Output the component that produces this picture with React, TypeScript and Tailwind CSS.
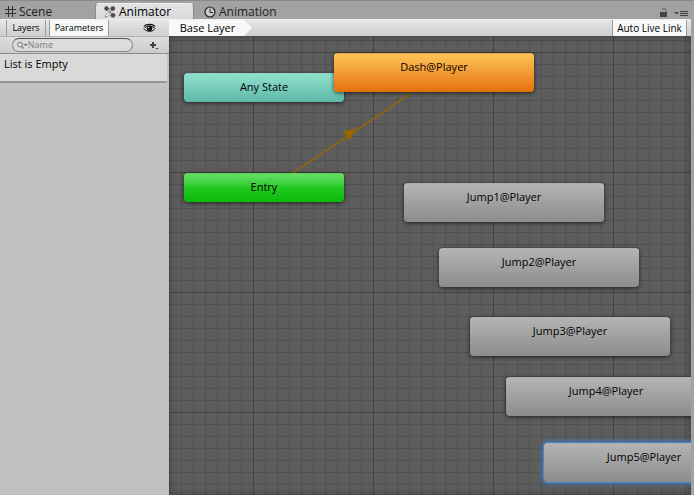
import React from "react";
import clsx from "clsx";

interface StateNode {
  name: string;
  place: string;
  look: string;
  selected?: boolean;
}

const stateNodes: StateNode[] = [
  {
    name: "Any State",
    place: "left-[15px] top-[37px] w-[160px] h-[29px]",
    look: "from-[#8fe0cc] to-[#5fb8a8]",
  },
  {
    name: "Entry",
    place: "left-[15px] top-[137px] w-[160px] h-[29px]",
    look: "from-[#66e066] via-[#20c820] to-[#08bb08]",
  },
  {
    name: "Dash@Player",
    place: "left-[165px] top-[17px] w-[200px] h-[39px]",
    look: "from-[#ffc455] to-[#e27000]",
  },
  {
    name: "Jump1@Player",
    place: "left-[235px] top-[147px] w-[200px] h-[39px]",
    look: "from-[#b4b4b4] to-[#8c8c8c]",
  },
  {
    name: "Jump2@Player",
    place: "left-[270px] top-[212px] w-[200px] h-[39px]",
    look: "from-[#b4b4b4] to-[#8c8c8c]",
  },
  {
    name: "Jump3@Player",
    place: "left-[301px] top-[281px] w-[200px] h-[39px]",
    look: "from-[#b4b4b4] to-[#8c8c8c]",
  },
  {
    name: "Jump4@Player",
    place: "left-[337px] top-[341px] w-[200px] h-[39px]",
    look: "from-[#b4b4b4] to-[#8c8c8c]",
  },
  {
    name: "Jump5@Player",
    place: "left-[375px] top-[407px] w-[200px] h-[39px]",
    look: "from-[#b4b4b4] to-[#8c8c8c]",
    selected: true,
  },
];

const SceneIcon = () => (
  <svg width="12" height="12" viewBox="0 0 12 12" stroke="#333" fill="none">
    <path d="M3.5 0v11M7.5 0v11M0 3.500h11M0 7.500h11" />
  </svg>
);

const AnimatorIcon = () => (
  <svg width="12" height="12" viewBox="0 0 12 12">
    <path d="M3 3l6 6M9 3L3 9M3 3h6" stroke="#888" />
    <g fill="#4a4a4a">
      <circle cx="2.5" cy="2.5" r="2.2" />
      <circle cx="8.8" cy="2.6" r="2.3" />
      <circle cx="9" cy="9.2" r="2.3" />
    </g>
    <path d="M1 11L2 8L5 6L6 7L4 10z" fill="#fff" stroke="#666" strokeWidth=".6" />
  </svg>
);

const ClockIcon = () => (
  <svg width="12" height="12" viewBox="0 0 12 12" fill="none" stroke="#222">
    <circle cx="6" cy="6" r="5" fill="#ccc" strokeWidth="1.2" />
    <path d="M6 2.5V6.5H9" />
  </svg>
);

const EyeIcon = () => (
  <svg width="13" height="10" viewBox="0 0 13 10">
    <path d="M1 5.5C3 2.6 10 2.6 12 5.5 10 9.2 3 9.2 1 5.5z" fill="#eee" stroke="#111" />
    <path d="M1 3.4C3.5.6 9.5.6 12 3.4" fill="none" stroke="#111" strokeWidth="1.3" />
    <circle cx="6.5" cy="5.4" r="2.8" fill="#111" />
    <circle cx="5.6" cy="4.5" r=".8" fill="#ddd" />
  </svg>
);

const SearchIcon = () => (
  <svg width="12" height="9" viewBox="0 0 12 9" fill="none" stroke="#777">
    <circle cx="3.3" cy="3.5" r="2.7" />
    <path d="M5.3 5.6L7.5 8" strokeWidth="1.3" />
    <path d="M7 2.5h5L9.5 5.4z" fill="#777" stroke="none" />
  </svg>
);

const PlusIcon = () => (
  <svg width="10" height="9" viewBox="0 0 10 9">
    <path d="M3 1h2v2h2v2H5v2H3V5H1V3h2z" fill="#444" />
    <path d="M6.5 7h3L8 8.6z" fill="#444" />
  </svg>
);

const LockIcon = () => (
  <svg width="8" height="9" viewBox="0 0 8 9">
    <path d="M2.5 2.5V2A1.7 1.7 0 0 1 6 2v2" fill="none" stroke="#666" />
    <path d="M0 4h7v5H0z" fill="#444" />
  </svg>
);

const MenuIcon = () => (
  <svg width="14" height="7" viewBox="0 0 14 7">
    <path d="M0 2h5L2.5 4.5z" fill="#444" />
    <path d="M6 1.5h8M6 3.5h8M6 5.5h8" stroke="#444" />
  </svg>
);

const WindowTabs = () => (
  <div className="h-[19px] flex items-end border-t border-[#8a8a8a] bg-[#a2a2a2] text-[12px] leading-[14px] text-[#222]">
    <button className="h-4 w-[95px] pt-px pl-[5px] flex items-center gap-[2px]">
      <SceneIcon />
      Scene
    </button>
    <button className="h-4 w-[99px] pt-px pl-2 flex items-center gap-[3px] rounded-t border border-b-0 border-[#8a8a8a] border-t-[#f0f0f0] bg-gradient-to-b from-[#e2e2e2] to-[#dadada] text-black">
      <AnimatorIcon />
      Animator
    </button>
    <button className="h-4 pt-px pl-[10px] flex items-center gap-[3px]">
      <ClockIcon />
      Animation
    </button>
    <div className="ml-auto mr-[6px] h-[12px] flex items-center gap-[6px]">
      <button aria-label="Lock" className="pb-[2px]">
        <LockIcon />
      </button>
      <button aria-label="Window menu">
        <MenuIcon />
      </button>
    </div>
  </div>
);

const Sidebar = () => (
  <aside className="w-[169px] shrink-0 flex flex-col bg-[#c2c2c2]">
    <div className="h-[17px] pl-[6px] flex border-t border-[#f0f0f0] bg-gradient-to-b from-[#e6e6e6] to-[#cfcfcf] text-[9px]">
      <button className="w-[40px] border-x border-[#9a9a9a]">Layers</button>
      <button className="ml-[3px] w-[60px] border-x border-[#9a9a9a] bg-[#f8f8f8]">
        Parameters
      </button>
      <button aria-label="Preview" className="ml-auto mr-[13px]">
        <EyeIcon />
      </button>
    </div>
    <div className="h-[18px] pl-3 pr-[10px] flex items-center justify-between border-y border-b-[#8c8c8c] border-t-[#b0b0b0] bg-gradient-to-b from-[#dedede] to-[#cbcbcb]">
      <label className="w-[121px] h-[14px] px-1 flex items-center rounded-full border border-[#888] border-t-[#555] bg-[#dcdcdc]">
        <SearchIcon />
        <input
          aria-label="Search parameters"
          placeholder="Name"
          className="w-full min-w-0 h-3 text-[9px] leading-3 outline-none placeholder:text-[#808080]"
        />
      </label>
      <button aria-label="Add parameter">
        <PlusIcon />
      </button>
    </div>
    <p className="h-[29px] mr-[2px] pl-1 pt-[3px] border-b-2 border-[#969696] bg-[#d9d9d9] text-[11px] leading-[14px]">
      List is Empty
    </p>
  </aside>
);

const Graph = () => (
  <div className="relative grow overflow-hidden bg-[#5d5d5d] bg-[linear-gradient(to_right,#434343_1px,transparent_1px),linear-gradient(to_bottom,#434343_1px,transparent_1px),linear-gradient(to_right,#515151_1px,transparent_1px),linear-gradient(to_bottom,#515151_1px,transparent_1px)] bg-size-[120px_120px,120px_120px,12px_12px,12px_12px] bg-position-[84px_16px,84px_16px,0px_4px,0px_4px]">
    <div className="absolute inset-0 shadow-[inset_0_0_8px_#00000055]" />
    <svg
      className="absolute left-[115px] top-[50px]"
      width="140"
      height="90"
      viewBox="0 0 140 90"
    >
      <path d="M6 89L126 8" stroke="#8c6414" strokeWidth="2" />
      <path d="M72 43L59 45L65.5 54.5z" fill="#9a6500" />
    </svg>
    {stateNodes.map((node) => (
      <button
        key={node.name}
        className={clsx(
          "absolute pt-[6px] flex items-start justify-center rounded-[4px] border-t border-white/30 bg-gradient-to-b text-[11px] leading-[14px] text-black",
          node.selected
            ? "ring-1 ring-[#4a86c0] shadow-[0_0_4px_2px_#3f7fbf]"
            : "shadow-[0_1px_4px_#000000aa]",
          node.place,
          node.look
        )}
      >
        {node.name}
      </button>
    ))}
  </div>
);

const App = () => {
  return (
    <div className="w-full min-h-screen flex flex-col bg-[#a2a2a2] font-['Open_Sans','Noto_Sans',sans-serif] text-[10px] leading-[14px] text-black">
      <WindowTabs />
      <div className="grow flex mr-[3px]">
        <Sidebar />
        <main className="grow min-w-0 flex flex-col">
          <div className="h-[17px] flex justify-between border-t border-[#f0f0f0] bg-gradient-to-b from-[#e6e6e6] to-[#cfcfcf]">
            <button className="w-[83px] pr-[6px] bg-[#f8f8f8] text-[11px] [clip-path:polygon(0_0,75px_0,100%_50%,75px_100%,0_100%)]">
              Base Layer
            </button>
            <button className="w-[75px] mr-1 border-x border-[#9a9a9a] bg-[#f8f8f8]">
              Auto Live Link
            </button>
          </div>
          <Graph />
        </main>
      </div>
    </div>
  );
};

export default App;
